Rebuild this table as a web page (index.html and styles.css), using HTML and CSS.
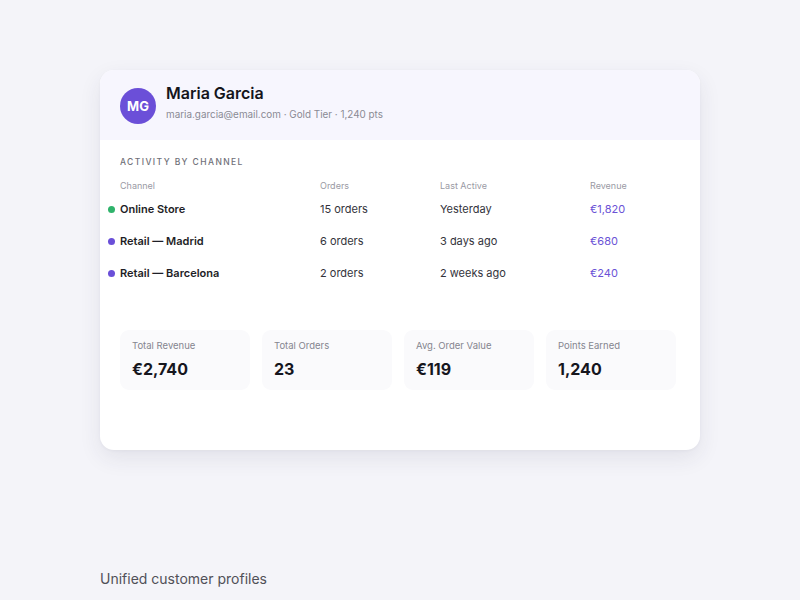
FILE: index.html
```html
<!DOCTYPE html>
<html>
<head>
<meta charset="utf-8">
<link rel="stylesheet" href="styles.css">
</head>
<body>
<div class="page">
  <div class="card">
    <div class="profile">
      <div class="avatar">MG</div>
      <div class="who">
        <div class="name">Maria Garcia</div>
        <div class="meta">maria.garcia@email.com · Gold Tier · 1,240 pts</div>
      </div>
    </div>
    <div class="body">
      <div class="section-title">ACTIVITY BY CHANNEL</div>
      <div class="table">
        <div class="row head">
          <div class="c1">Channel</div>
          <div class="c2">Orders</div>
          <div class="c3">Last Active</div>
          <div class="c4">Revenue</div>
        </div>
        <div class="row">
          <div class="c1 channel"><span class="dot green"></span>Online Store</div>
          <div class="c2">15 orders</div>
          <div class="c3">Yesterday</div>
          <div class="c4 rev">€1,820</div>
        </div>
        <div class="row">
          <div class="c1 channel"><span class="dot purple"></span>Retail — Madrid</div>
          <div class="c2">6 orders</div>
          <div class="c3">3 days ago</div>
          <div class="c4 rev">€680</div>
        </div>
        <div class="row">
          <div class="c1 channel"><span class="dot purple"></span>Retail — Barcelona</div>
          <div class="c2">2 orders</div>
          <div class="c3">2 weeks ago</div>
          <div class="c4 rev">€240</div>
        </div>
      </div>
      <div class="stats">
        <div class="stat"><div class="label">Total Revenue</div><div class="value">€2,740</div></div>
        <div class="stat"><div class="label">Total Orders</div><div class="value">23</div></div>
        <div class="stat"><div class="label">Avg. Order Value</div><div class="value">€119</div></div>
        <div class="stat"><div class="label">Points Earned</div><div class="value">1,240</div></div>
      </div>
    </div>
  </div>
  <div class="caption">Unified customer profiles</div>
</div>
</body>
</html>
```

FILE: styles.css
```css
* { box-sizing: border-box; }
html, body { margin: 0; padding: 0; }
body {
  background: #f4f4f9;
  font-family: Inter, "Noto Sans", sans-serif;
  color: #1a1a22;
  width: 800px;
  height: 600px;
  overflow: hidden;
}
.page {
  padding: 70px 100px 0;
  display: flex;
  flex-direction: column;
}
.card {
  background: #ffffff;
  border-radius: 14px;
  height: 380px;
  box-shadow: 0 8px 22px rgba(40, 40, 80, 0.09), 0 1px 3px rgba(40, 40, 80, 0.04);
  overflow: hidden;
}
.profile {
  height: 70px;
  background: #f7f6fe;
  display: flex;
  align-items: center;
  padding: 0 20px;
  gap: 10px;
}
.avatar {
  width: 36px;
  height: 36px;
  border-radius: 50%;
  background: #6b4fd8;
  color: #fff;
  font-weight: 700;
  font-size: 13px;
  display: flex;
  align-items: center;
  justify-content: center;
  margin-top: 2px;
}
.who {
  display: flex;
  flex-direction: column;
  margin-bottom: 6px;
}
.name {
  font-size: 16px;
  font-weight: 600;
  line-height: 20px;
  color: #15151c;
}
.meta {
  font-size: 9.9px;
  line-height: 14px;
  color: #8a8a94;
  margin-top: 4px;
}
.body {
  padding: 16px 20px 0;
}
.section-title {
  font-size: 8.5px;
  letter-spacing: 1.4px;
  color: #707078;
  font-weight: 500;
  line-height: 12px;
}
.table { margin-top: 10px; }
.row {
  display: grid;
  grid-template-columns: 200px 120px 150px 90px;
  height: 32px;
  align-items: center;
  font-size: 11px;
  color: #33333b;
}
.row.head {
  height: 14px;
  font-size: 9px;
  color: #9a9aa4;
  margin-bottom: 1px;
}
.channel {
  font-weight: 600;
  color: #1e1e26;
  position: relative;
}
.dot {
  position: absolute;
  left: -12px;
  top: 50%;
  width: 7px;
  height: 7px;
  margin-top: -3.5px;
  border-radius: 50%;
}
.dot.green { background: #2fb36b; }
.dot.purple { background: #6a4fd8; }
.rev { color: #6b52d6; }
.stats {
  margin-top: 41px;
  display: grid;
  grid-template-columns: repeat(4, 130px);
  gap: 12px;
}
.stat {
  background: #fafafc;
  border-radius: 9px;
  height: 60px;
  padding: 10px 12px;
}
.label {
  font-size: 9.5px;
  color: #85858f;
  line-height: 12px;
}
.value {
  margin-top: 6px;
  font-size: 16px;
  font-weight: 700;
  color: #16161e;
  line-height: 22px;
}
.caption {
  margin-top: 120px;
  font-size: 14px;
  color: #505058;
  line-height: 18px;
}
```
